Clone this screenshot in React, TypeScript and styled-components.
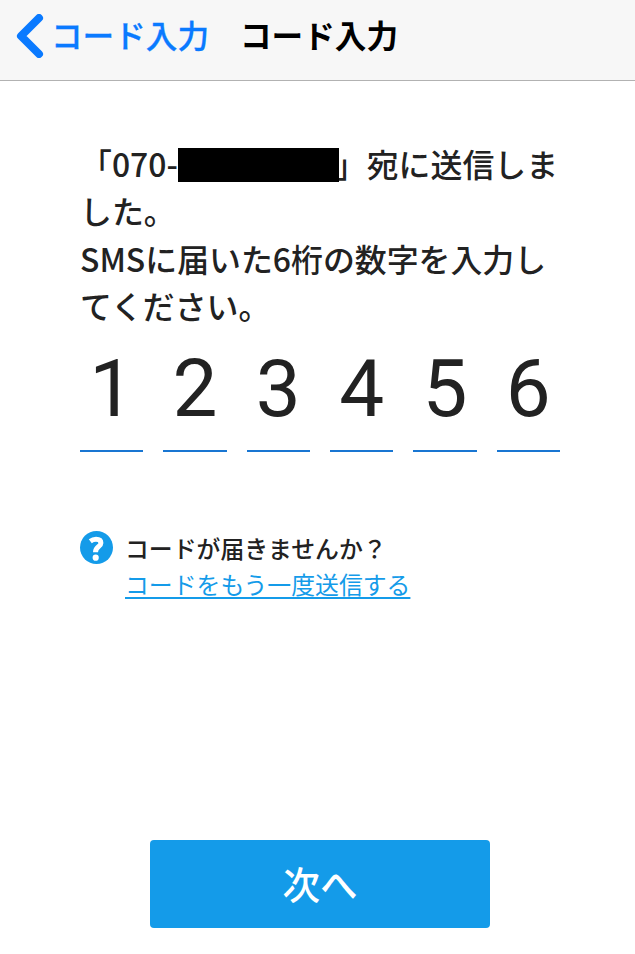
import React from "react";
import styled, { createGlobalStyle } from "styled-components";

const Global = createGlobalStyle`
  * { box-sizing: border-box; }
  body { margin: 0; background: #fff; font-family: "Noto Sans CJK JP", sans-serif; }
`;
const Screen = styled.div`
  width: 635px;
  height: 954px;
  display: flex;
  flex-direction: column;
  background: #fff;
  overflow: hidden;
`;
const NavBar = styled.header`
  height: 81px;
  flex: none;
  display: flex;
  align-items: flex-start;
  background: #f7f7f7;
  border-bottom: 1px solid #b2b2b2;
  padding: 14px 0 0 16px;
`;
const Back = styled.button`
  display: flex;
  gap: 7px;
  padding: 0;
  border: 0;
  background: none;
  color: #0a7aff;
  font: 500 31.6px/40px "Noto Sans CJK JP", sans-serif;
  -webkit-text-stroke: 0.3px #0a7aff;
  width: 224px;
  white-space: nowrap;
`;
const Title = styled.h1`
  margin: 0;
  color: #000;
  font-size: 31.6px;
  font-weight: 700;
  line-height: 40px;
  white-space: nowrap;
`;
const Content = styled.main`
  display: flex;
  flex-direction: column;
  padding: 59px 75px 0 80px;
`;
const Message = styled.p`
  height: 190px;
  margin: 0;
  color: #222;
  font-size: 31.9px;
  font-weight: 500;
  line-height: 47.3px;
  white-space: nowrap;
`;
const Redaction = styled.span`
  display: inline-block;
  position: relative;
  width: 161px;
  height: 34px;
  margin-right: -4px;
  background: #000;
  vertical-align: -5px;
`;
const Digits = styled.div`
  width: 480px;
  margin-top: 13px;
  display: grid;
  grid-template-columns: repeat(6, 63.33px);
  justify-content: space-between;
`;
const Digit = styled.div`
  height: 109px;
  border-bottom: 2px solid #1976d2;
  color: #222;
  font: 400 80px/92px Roboto, sans-serif;
  text-align: center;
`;
const Help = styled.section`
  display: flex;
  margin-top: 79px;
  gap: 12px;
`;
const HelpText = styled.div`
  display: flex;
  flex-direction: column;
  align-items: flex-start;
  margin-top: -1px;
  font-size: 23.85px;
  line-height: 36px;
  font-weight: 500;
  color: #222;
  white-space: nowrap;
`;
const Resend = styled.a`
  color: #149be9;
  font-weight: 400;
  text-decoration: underline;
  text-decoration-thickness: 2px;
  text-underline-offset: 3px;
`;
const Next = styled.button`
  width: 340px;
  height: 88px;
  margin: auto 0 26px 150px;
  padding: 0 0 2px;
  border: 0;
  border-radius: 4px;
  background: #149be9;
  color: #fff;
  font: 500 37.5px/86px "Noto Sans CJK JP", sans-serif;
`;

export default function App() {
  return (
    <Screen>
      <Global />
      <NavBar>
        <Back>
          <svg width="28" height="44" viewBox="0 0 28 44" fill="none">
            <path d="M23 4 5 22l18 18" stroke="#0a7aff" strokeWidth="8" strokeLinecap="round" strokeLinejoin="round" />
          </svg>
          コード入力
        </Back>
        <Title>コード入力</Title>
      </NavBar>
      <Content>
        <Message>
          「070-<Redaction />」宛に送信しま<br />した。<br />SMSに届いた6桁の数字を入力し<br />てください。
        </Message>
        <Digits>
          {[1, 2, 3, 4, 5, 6].map((n) => <Digit key={n}>{n}</Digit>)}
        </Digits>
        <Help>
          <svg width="33" height="33" viewBox="0 0 33 33" fill="none">
            <circle cx="16.5" cy="16.5" r="16.5" fill="#149be9" />
            <path d="M10.3 10.3C12 9 14 8.300 16 8.300c3.200 0 4.900 1.400 4.900 3.700 0 4-5.400 3.200-5.400 9.200" stroke="#fff" strokeWidth="5" />
            <circle cx="15.700" cy="26.700" r="3.100" fill="#fff" />
          </svg>
          <HelpText>
            <span>コードが届きませんか？</span>
            <Resend>コードをもう一度送信する</Resend>
          </HelpText>
        </Help>
      </Content>
      <Next>次へ</Next>
    </Screen>
  );
}
